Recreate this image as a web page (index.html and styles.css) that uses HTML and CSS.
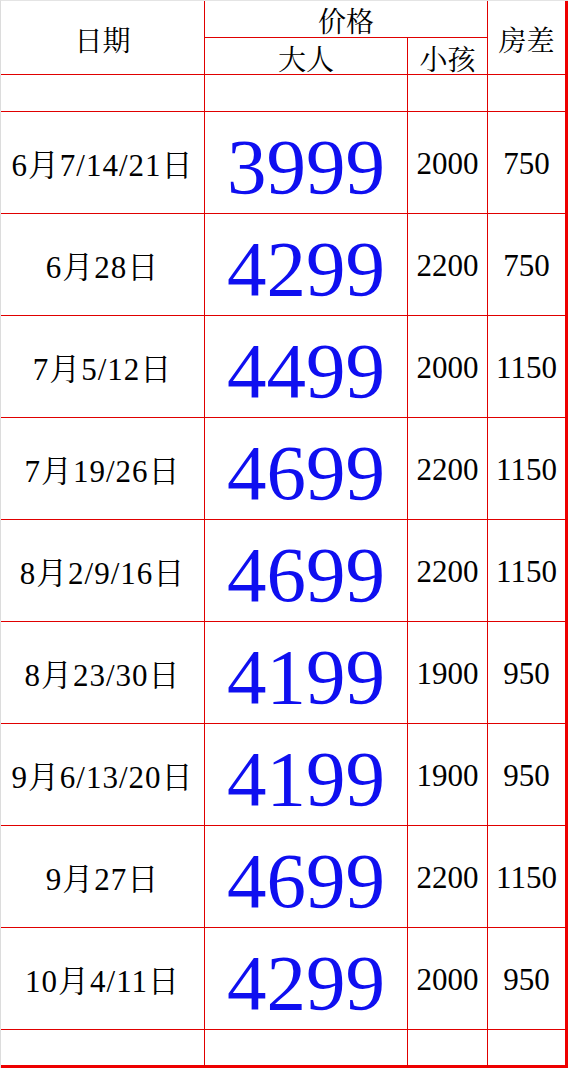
FILE: index.html
```html
<!DOCTYPE html>
<html lang="zh">
<head>
<meta charset="utf-8">
<title>价格表</title>
<link rel="stylesheet" href="styles.css">
</head>
<body>
<div class="sheet">
  <div class="cell head h-date">日期</div>
  <div class="cell head h-price">价格</div>
  <div class="cell head h-room end">房差</div>
  <div class="cell head h-adult">大人</div>
  <div class="cell head h-child">小孩</div>

  <div class="cell"></div><div class="cell"></div><div class="cell"></div><div class="cell end"></div>

  <div class="cell date">6月7/14/21日</div><div class="cell big">3999</div><div class="cell num">2000</div><div class="cell num end">750</div>
  <div class="cell date">6月28日</div><div class="cell big">4299</div><div class="cell num">2200</div><div class="cell num end">750</div>
  <div class="cell date">7月5/12日</div><div class="cell big">4499</div><div class="cell num">2000</div><div class="cell num end">1150</div>
  <div class="cell date">7月19/26日</div><div class="cell big">4699</div><div class="cell num">2200</div><div class="cell num end">1150</div>
  <div class="cell date">8月2/9/16日</div><div class="cell big">4699</div><div class="cell num">2200</div><div class="cell num end">1150</div>
  <div class="cell date">8月23/30日</div><div class="cell big">4199</div><div class="cell num">1900</div><div class="cell num end">950</div>
  <div class="cell date">9月6/13/20日</div><div class="cell big">4199</div><div class="cell num">1900</div><div class="cell num end">950</div>
  <div class="cell date">9月27日</div><div class="cell big">4699</div><div class="cell num">2200</div><div class="cell num end">1150</div>
  <div class="cell date">10月4/11日</div><div class="cell big">4299</div><div class="cell num">2000</div><div class="cell num end">950</div>

  <div class="cell last"></div><div class="cell last"></div><div class="cell last"></div><div class="cell last end"></div>
</div>
</body>
</html>
```
FILE: styles.css
```css
html, body {
  margin: 0;
  padding: 0;
  background: #ffffff;
}

.sheet {
  width: 568px;
  height: 1068px;
  box-sizing: border-box;
  border-left: 1px solid #dcdcdc;
  border-top: 1px solid #e4e4e4;
  display: grid;
  grid-template-columns: 204px 203px 80px 80px;
  grid-template-rows: 37px 37px 37px repeat(9, 102px) 38px;
  font-family: "Liberation Serif", "Noto Serif CJK SC", "Noto Sans CJK SC", serif;
  color: #000;
}

.cell {
  box-sizing: border-box;
  border-right: 1px solid #e00000;
  border-bottom: 1px solid #e00000;
  display: flex;
  align-items: center;
  justify-content: center;
  white-space: nowrap;
}

.end {
  border-right: 3px solid #ee0000;
}

.last {
  border-bottom: 3px solid #ee0000;
}

.head {
  font-size: 28px;
  padding-top: 3px;
}

.h-date { grid-column: 1; grid-row: 1 / 3; }
.h-price { grid-column: 2 / 4; grid-row: 1; padding-top: 1px; }
.h-room { grid-column: 4; grid-row: 1 / 3; }
.h-adult { grid-column: 2; grid-row: 2; }
.h-child { grid-column: 3; grid-row: 2; }

.date {
  font-size: 31px;
  letter-spacing: 1px;
  padding-top: 0;
}

.num {
  font-size: 31px;
  padding-top: 3px;
}

.big {
  font-size: 79px;
  color: #0f0ff0;
  padding-top: 8px;
}
```
